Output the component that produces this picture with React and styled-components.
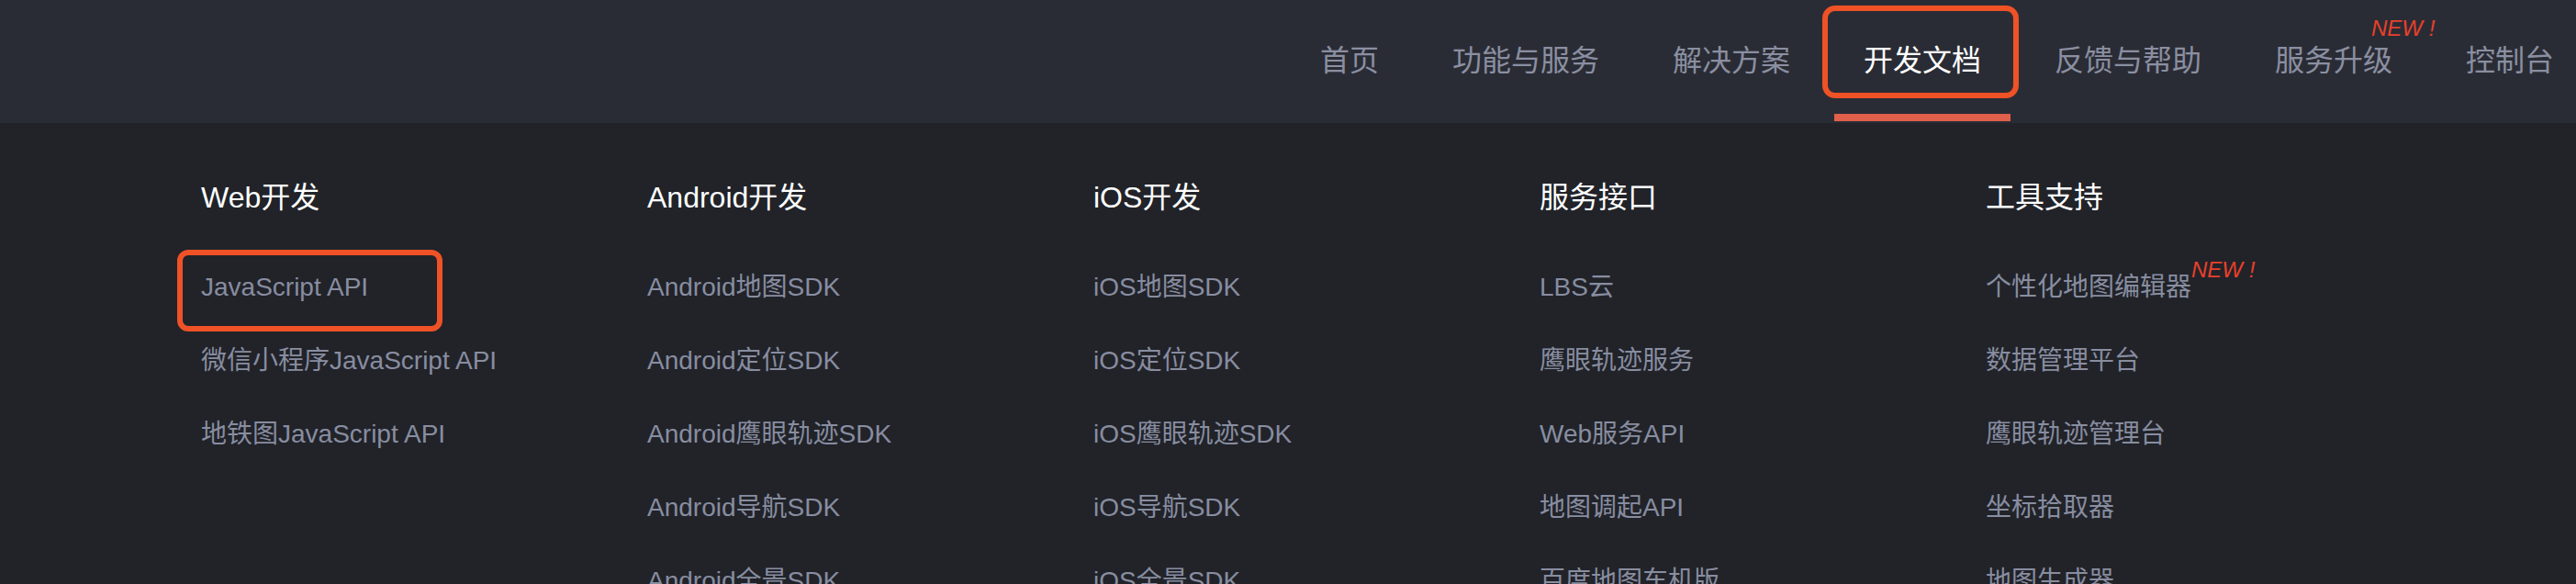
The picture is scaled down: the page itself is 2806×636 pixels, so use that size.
import React from 'react';
import styled, { createGlobalStyle } from 'styled-components';

const GlobalStyle = createGlobalStyle`
  html, body {
    margin: 0;
    padding: 0;
    background: #212329;
    overflow: hidden;
  }
  body {
    font-family: "Liberation Sans", "Noto Sans CJK SC", sans-serif;
  }
`;

const Page = styled.div`
  width: 2806px;
  height: 636px;
  overflow: hidden;
  background: #212329;
`;

const Header = styled.header`
  height: 134px;
  background: #2a2c35;
  display: flex;
  justify-content: flex-end;
`;

const Nav = styled.nav`
  display: flex;
  margin-right: -16px;
`;

const NavItem = styled.div`
  position: relative;
  display: flex;
  align-items: center;
  height: 134px;
  box-sizing: border-box;
  padding: 0 40px 8px;
  font-family: "Noto Sans CJK SC", sans-serif;
  font-size: 32px;
  color: ${(p) => (p.$active ? '#ffffff' : '#8a8fa1')};
  white-space: nowrap;

  ${(p) =>
    p.$active &&
    `
    &::after {
      content: '';
      position: absolute;
      left: 8px;
      right: 8px;
      bottom: 2px;
      height: 8px;
      background: #e0604b;
    }
  `}
`;

const NavLabel = styled.span`
  position: relative;
  display: block;
  line-height: 40px;
`;

const NavBadge = styled.span`
  position: absolute;
  left: 105px;
  top: -24px;
  font-family: "Liberation Sans", sans-serif;
  font-style: italic;
  font-size: 24px;
  line-height: 24px;
  color: #e8402a;
  white-space: nowrap;
`;

const NavMark = styled.span`
  position: absolute;
  left: -5px;
  right: -1px;
  top: 6px;
  height: 101px;
  box-sizing: border-box;
  border: 6px solid #ee5226;
  border-radius: 14px;
  pointer-events: none;
`;

const Columns = styled.div`
  display: grid;
  grid-template-columns: repeat(5, 486px);
  padding: 61px 0 0 219px;
`;

const Column = styled.div`
  display: flex;
  flex-direction: column;
  align-items: flex-start;
`;

const ColumnTitle = styled.h3`
  margin: 0 0 38px;
  font-size: 32px;
  line-height: 40px;
  font-weight: normal;
  color: #ffffff;
  white-space: nowrap;
`;

const Item = styled.div`
  position: relative;
  font-size: 28px;
  line-height: 80px;
  color: #888da0;
  white-space: nowrap;
`;

const ItemText = styled.span`
  position: relative;
`;

const ItemBadge = styled.span`
  position: absolute;
  left: 100%;
  top: -15px;
  font-style: italic;
  font-size: 24px;
  line-height: 24px;
  color: #e8402a;
  white-space: nowrap;
`;

const ItemMark = styled.span`
  position: absolute;
  left: -26px;
  top: -1px;
  width: 289px;
  height: 89px;
  box-sizing: border-box;
  border: 6px solid #ee5226;
  border-radius: 12px;
  pointer-events: none;
`;

const navItems = [
  { label: '首页' },
  { label: '功能与服务' },
  { label: '解决方案' },
  { label: '开发文档', active: true },
  { label: '反馈与帮助' },
  { label: '服务升级', badge: 'NEW !' },
  { label: '控制台' },
];

const columns = [
  {
    title: 'Web开发',
    items: [
      { label: 'JavaScript API', marked: true },
      { label: '微信小程序JavaScript API' },
      { label: '地铁图JavaScript API' },
    ],
  },
  {
    title: 'Android开发',
    items: [
      { label: 'Android地图SDK' },
      { label: 'Android定位SDK' },
      { label: 'Android鹰眼轨迹SDK' },
      { label: 'Android导航SDK' },
      { label: 'Android全景SDK' },
    ],
  },
  {
    title: 'iOS开发',
    items: [
      { label: 'iOS地图SDK' },
      { label: 'iOS定位SDK' },
      { label: 'iOS鹰眼轨迹SDK' },
      { label: 'iOS导航SDK' },
      { label: 'iOS全景SDK' },
    ],
  },
  {
    title: '服务接口',
    items: [
      { label: 'LBS云' },
      { label: '鹰眼轨迹服务' },
      { label: 'Web服务API' },
      { label: '地图调起API' },
      { label: '百度地图车机版' },
    ],
  },
  {
    title: '工具支持',
    items: [
      { label: '个性化地图编辑器', badge: 'NEW !' },
      { label: '数据管理平台' },
      { label: '鹰眼轨迹管理台' },
      { label: '坐标拾取器' },
      { label: '地图生成器' },
    ],
  },
];

const App = () => {
  return (
    <Page>
      <GlobalStyle />
      <Header>
        <Nav>
          {navItems.map((item) => (
            <NavItem key={item.label} $active={item.active}>
              <NavLabel>
                {item.label}
                {item.badge && <NavBadge>{item.badge}</NavBadge>}
              </NavLabel>
              {item.active && <NavMark />}
            </NavItem>
          ))}
        </Nav>
      </Header>

      <Columns>
        {columns.map((col) => (
          <Column key={col.title}>
            <ColumnTitle>{col.title}</ColumnTitle>
            {col.items.map((item) => (
              <Item key={item.label}>
                <ItemText>
                  {item.label}
                  {item.badge && <ItemBadge>{item.badge}</ItemBadge>}
                </ItemText>
                {item.marked && <ItemMark />}
              </Item>
            ))}
          </Column>
        ))}
      </Columns>
    </Page>
  );
};

export default App;
